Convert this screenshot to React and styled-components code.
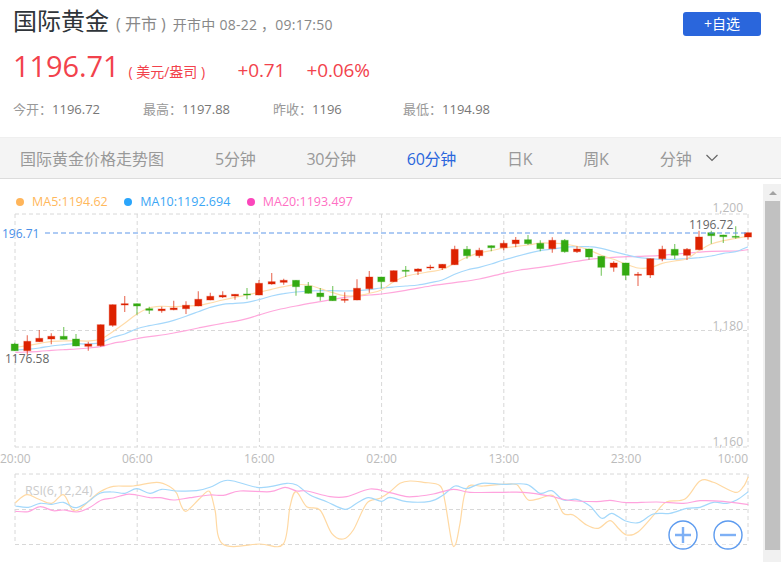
import React from "react";
import styled, { createGlobalStyle } from "styled-components";

const FONT = `"Open Sans", "Noto Sans CJK SC", sans-serif`;

// -------------------------------DATA
// [x, wick top, body top, body bottom, wick bottom, up?]
const candles = [
  [14.7, 342.7, 344, 350.7, 351, 0], [27.3, 335.3, 341.3, 350.7, 355, 1], [39.3, 330, 338.3, 341.7, 342, 1],
  [51.3, 333.3, 336.3, 339, 344.3, 1], [63.7, 327, 336.3, 339.3, 339.5, 0], [76, 334, 339, 346, 346.2, 0],
  [88.3, 341.7, 344, 346.3, 350.7, 1], [100.7, 324.5, 324.7, 345.7, 346.7, 1], [112.7, 304.5, 304.7, 325.3, 326.7, 1],
  [124.7, 296, 303.7, 305, 312, 1], [137, 303.5, 303.7, 306, 314.7, 0], [149.3, 306.7, 308.7, 310.3, 314, 0],
  [161.7, 306.7, 309, 310.7, 312.7, 1], [173.7, 300.7, 308, 309.7, 310.3, 1], [186, 301.3, 305.3, 308.7, 314, 1],
  [198.3, 291.3, 299.3, 306, 306.2, 1], [210.3, 292.7, 296.3, 300, 300.2, 1], [222.7, 291.3, 295.3, 297, 298, 1],
  [235, 294, 294.3, 296, 299.7, 1], [247, 288, 294, 294.7, 299.3, 0], [259, 280, 283.3, 295, 295.2, 1],
  [271.7, 273, 281.7, 284, 284.7, 1], [283.7, 278.7, 280.3, 282.3, 284.7, 1], [296, 280, 280.3, 286.7, 295.7, 0],
  [308.3, 282, 286, 293.3, 293.5, 0], [320.3, 288, 293, 296.7, 300.7, 0], [332.7, 286, 296, 300.7, 300.9, 0],
  [344.7, 292.3, 299.3, 300.3, 302.7, 1], [357, 279.3, 288.3, 300, 300.2, 1], [369.3, 271, 277, 288.7, 292.7, 1],
  [381.3, 276.8, 277, 281.7, 288.7, 0], [393.7, 270.5, 270.7, 281.7, 281.9, 1], [405.7, 266, 270.3, 271.3, 277, 0],
  [418, 268.3, 269, 271.3, 275, 1], [430.3, 264.7, 267, 268, 270, 1], [442.3, 264.1, 264.3, 268, 270, 1],
  [454.7, 245.7, 249.3, 264.7, 264.9, 1], [467, 246, 249.3, 255.7, 258.7, 0], [479.3, 247.7, 250.3, 255.7, 257.7, 1],
  [491.3, 245.5, 245.7, 247.7, 251.3, 0], [503.7, 240.3, 243.3, 247.7, 250.3, 1], [515.7, 237, 240, 243.7, 247.3, 1],
  [528, 235, 239.7, 243.7, 245, 0], [540.3, 240.3, 243.3, 248.7, 251.3, 0], [552.3, 237.3, 240.3, 248.7, 252.7, 1],
  [564.7, 239, 240.3, 251.7, 252.7, 0], [577, 246.3, 249, 251.7, 253, 1], [589, 248.8, 249, 257, 259.7, 0],
  [601.3, 256.1, 256.3, 267.3, 275.7, 0], [613.7, 261.3, 263, 267.3, 271.7, 1], [625.7, 262.8, 263, 275.3, 280, 0],
  [638, 272, 274.3, 275, 286, 1], [650.3, 258.5, 258.7, 275, 278, 1], [662.3, 245.7, 249.3, 258.7, 261.3, 1],
  [674.7, 244, 249.3, 255.3, 259, 0], [687, 248, 249.3, 255.3, 260, 1], [699, 230.7, 237, 249.7, 249.9, 1],
  [711.3, 230.7, 232.7, 235.7, 243.7, 0], [723.3, 234.8, 235, 236.7, 243, 0], [735.7, 226.3, 236.3, 237.3, 238.7, 0],
  [748, 232.5, 232.7, 237, 239.7, 1],
];

// points read at 3x, grouped by the part of the chart they fall in
const TOP = 179; // where the svg starts in the page
const pts = (ox, oy, list) => list.map(([x, y]) => [ox + x / 3, oy + y / 3 - TOP]);

const ma5 = [
  ...pts(0, 180, [[40,503],[80,497],[120,490],[155,484],[190,483],[228,482],[265,483],[300,478],[338,455],[374,430],[411,402],[448,384],[485,379],[521,380],[558,378],[595,376],[631,369],[668,360],[705,352],[741,345]]),
  ...pts(260, 180, [[0,336],[35,328],[71,320],[108,314],[145,315],[181,326],[218,338],[254,347],[291,347],[328,340],[364,330],[401,305],[437,289],[474,281],[511,275],[547,268],[584,250],[621,232],[658,218],[694,212],[731,204]]),
  ...pts(520, 180, [[24,195],[61,189],[97,190],[134,192],[171,199],[207,210],[244,226],[281,238],[317,252],[354,264],[391,263],[427,250],[464,243],[501,236],[537,212],[574,192],[610,182],[647,175],[684,168]]),
];
const ma10 = [
  ...pts(0, 180, [[46,510],[80,508],[118,504],[154,498],[191,494],[228,491],[265,492],[302,488],[338,472],[374,462],[411,446],[448,437],[485,430],[521,421],[558,409],[595,395],[631,382],[668,373],[705,370],[741,367]]),
  ...pts(260, 180, [[0,358],[35,348],[71,341],[108,336],[145,333],[181,332],[218,332],[254,333],[291,332],[328,329],[364,324],[401,321],[437,318],[474,315],[511,308],[547,300],[584,283],[621,270],[658,262],[694,252],[731,240]]),
  ...pts(520, 180, [[24,220],[61,212],[97,207],[134,202],[171,200],[207,200],[244,205],[281,215],[317,224],[354,232],[391,236],[427,238],[464,238],[501,236],[537,233],[574,228],[610,220],[647,215],[684,200]]),
];
const ma20 = [
  ...pts(0, 180, [[46,517],[82,516],[118,514],[154,511],[191,509],[228,507],[265,504],[302,500],[338,490],[374,484],[411,476],[448,470],[485,465],[521,459],[558,452],[595,444],[631,437],[668,430],[705,424],[741,416]]),
  ...pts(260, 180, [[0,404],[50,390],[108,378],[181,365],[254,352],[328,345],[364,342],[437,331],[511,318],[584,308],[658,297],[731,280]]),
  ...pts(520, 180, [[0,270],[61,262],[134,250],[207,238],[281,232],[354,229],[427,226],[501,219],[574,214],[647,213],[684,209]]),
];
const rsi6 = [
  ...pts(0, 430, [[46,218],[80,194],[115,207],[155,220],[190,194],[215,237],[235,240],[270,210],[300,185],[340,169],[400,168],[470,157],[510,170],[530,190],[545,230],[560,243],[600,205],[628,184],[645,240],[668,342],[780,342],[850,342],[870,230],[888,185],[920,230],[960,240],[995,310],[1030,327],[1060,300],[1100,220],[1140,205]]),
  ...pts(390, 430, [[0,185],[30,160],[60,153],[100,157],[150,167],[165,215],[185,335],[197,342],[210,280],[230,175],[280,168],[370,162],[390,175],[415,210],[450,205],[490,197],[520,250],[550,255],[590,285],[625,295],[660,272],[685,295],[710,315],[745,305],[800,245],[830,215],[885,207],[930,153],[970,157],[1035,187],[1060,170],[1075,140]]),
];
const rsi12 = [
  ...pts(0, 430, [[46,228],[85,232],[120,220],[155,223],[190,217],[225,233],[260,218],[300,190],[340,186],[375,190],[410,176],[450,190],[485,178],[530,183],[590,182],[630,172],[670,153],[700,153],[770,172],[810,170],[860,160],[890,165],[930,195],[980,215],[1035,238],[1070,220],[1105,203],[1145,214]]),
  ...pts(390, 430, [[0,202],[50,215],[120,214],[160,195],[195,168],[230,176],[275,160],[340,163],[410,163],[450,190],[485,182],[520,210],[560,208],[600,228],[635,265],[665,250],[705,272],[745,278],[790,252],[840,250],[890,235],[930,232],[970,217],[1010,220],[1040,210],[1075,185]]),
];
const rsi24 = [
  ...pts(0, 430, [[46,244],[85,245],[120,230],[160,242],[190,240],[230,246],[265,235],[305,210],[340,204],[380,193],[410,195],[450,203],[480,203],[520,210],[570,203],[630,195],[670,196],[720,183],[810,185],[855,172],[890,183],[920,183],[990,200],[1040,200],[1110,177]]),
  ...pts(390, 430, [[0,188],[50,200],[90,198],[130,192],[190,178],[240,187],[340,187],[400,187],[480,198],[530,210],[620,215],[660,211],[710,218],[800,216],[880,220],[930,212],[1000,214],[1075,224]]),
];

const smooth = (p) => {
  let d = `M${p[0][0].toFixed(1)} ${p[0][1].toFixed(1)}`;
  for (let i = 0; i < p.length - 1; i++) {
    const a = p[i - 1] || p[i];
    const b = p[i];
    const c = p[i + 1];
    const e = p[i + 2] || c;
    d += `C${(b[0] + (c[0] - a[0]) / 6).toFixed(1)} ${(b[1] + (c[1] - a[1]) / 6).toFixed(1)} ${(c[0] - (e[0] - b[0]) / 6).toFixed(1)} ${(c[1] - (e[1] - b[1]) / 6).toFixed(1)} ${c[0].toFixed(1)} ${c[1].toFixed(1)}`;
  }
  return d;
};

const gridX = [15, 137.2, 259.4, 381.6, 503.8, 626, 748];
const timeLabels = ["20:00", "06:00", "16:00", "02:00", "13:00", "23:00", "10:00"];
const tabs = ["5分钟", "30分钟", "60分钟", "日K", "周K"];
const quotes = [
  { label: "今开", value: "1196.72" },
  { label: "最高", value: "1197.88" },
  { label: "昨收", value: "1196" },
  { label: "最低", value: "1194.98" },
];
const legend = [
  { name: "MA5:1194.62", color: "#ffb85c", dot: "#ffb55a" },
  { name: "MA10:1192.694", color: "#3ba6f5", dot: "#2aa5fb" },
  { name: "MA20:1193.497", color: "#ff6fc4", dot: "#fb46bb" },
];

// -------------------------------STYLES
const GlobalStyle = createGlobalStyle`
  html, body {
    margin: 0;
    padding: 0;
    height: 100%;
    overflow: hidden;
    background: #fff;
  }
`;
const Page = styled.div`
  width: 781px;
  height: 562px;
  overflow: hidden;
  font-family: ${FONT};
  display: flex;
  flex-direction: column;
`;
const Header = styled.header`
  height: 137px;
  padding: 1px 0 0 13px;
  box-sizing: border-box;
  position: relative;
`;
const TitleRow = styled.div`
  display: flex;
  align-items: baseline;
  height: 45px;
  line-height: 39px;
`;
const Title = styled.h1`
  margin: 0;
  font-size: 24px;
  font-weight: 400;
  color: #2f3439;
`;
const Market = styled.span`
  font-size: 16px;
  color: #888;
  margin-left: 7px;
  white-space: pre;
`;
const Status = styled.span`
  font-size: 14px;
  color: #888;
  letter-spacing: 0.25px;
  margin-left: 7px;
  white-space: pre;
`;
const AddButton = styled.button`
  position: absolute;
  top: 12px;
  left: 683px;
  width: 78px;
  height: 24px;
  border: none;
  border-radius: 3px;
  background: #2a66dc;
  color: #fff;
  font-family: ${FONT};
  font-size: 14px;
  padding: 0;
  line-height: 24px;
`;
const PriceRow = styled.div`
  display: flex;
  align-items: baseline;
  height: 44px;
  line-height: 40px;
  color: #f2424c;
`;
const Price = styled.span`
  font-size: 29px;
  letter-spacing: -0.1px;
`;
const Unit = styled.span`
  font-size: 14px;
  margin-left: 9px;
  width: 109px;
  white-space: pre;
`;
const Change = styled.span`
  font-size: 19px;
  letter-spacing: -0.1px;
  width: ${(p) => p.$w}px;
`;
const QuoteRow = styled.div`
  display: grid;
  grid-template-columns: repeat(4, 130px);
  margin-top: 9px;
  line-height: 20px;
  font-size: 13px;
  color: #777;
`;
const QuoteLabel = styled.span`
  color: #999;
`;
const Toolbar = styled.nav`
  height: 42px;
  box-sizing: border-box;
  background: #f4f4f4;
  border-top: 1px solid #efefef;
  border-bottom: 1px solid #dcdcdc;
  padding-left: 20px;
  display: flex;
  align-items: center;
  gap: 51px;
  font-size: 16px;
  color: #999;
`;
const Tab = styled.span`
  color: ${(p) => (p.$active ? "#2a66dc" : "#999")};
  letter-spacing: ${(p) => (p.$title ? "0" : "-0.25px")};
  white-space: nowrap;
`;
const Period = styled.span`
  display: flex;
  align-items: center;
  gap: 14px;
`;
const Body = styled.main`
  flex: 1;
  display: flex;
  min-height: 0;
`;
const ChartArea = styled.section`
  width: 763px;
  position: relative;
`;
const Legend = styled.ul`
  list-style: none;
  margin: 0;
  padding: 14px 0 0 16px;
  display: flex;
  gap: 16.5px;
  font-size: 12.5px;
  line-height: 18px;
  position: absolute;
  top: 0;
  left: 0;
`;
const LegendItem = styled.li`
  display: flex;
  align-items: center;
  gap: 8px;
  color: ${(p) => p.$color};
  &::before {
    content: "";
    width: 8px;
    height: 8px;
    border-radius: 50%;
    background: ${(p) => p.$dot};
  }
`;
const Chart = styled.svg`
  display: block;
  width: 763px;
  height: 383px;
  text {
    font-family: ${FONT};
    font-size: 12px;
  }
`;
const Scrollbar = styled.aside`
  width: 18px;
  background: #f1f1f1;
  margin-top: 5px;
  display: flex;
  flex-direction: column;
  align-items: flex-end;
`;
const ArrowBox = styled.div`
  width: 16px;
  height: 17px;
  display: flex;
  align-items: center;
  justify-content: center;
  &::before {
    content: "";
    border-left: 4px solid transparent;
    border-right: 4px solid transparent;
    border-bottom: 4px solid #a3a3a3;
  }
`;
const Thumb = styled.div`
  width: 15px;
  height: 349px;
  background: #c1c1c1;
  margin-right: 1px;
`;

// -------------------------------COMPONENT
const Candle = ({ c }) => {
  const [x, wt, bt, bb, wb, up] = c;
  const color = up ? "#dd2200" : "#33aa11";
  return (
    <g>
      <line x1={x} x2={x} y1={wt - TOP} y2={wb - TOP} stroke={color} strokeOpacity="0.6" strokeWidth="1.2" />
      <rect
        x={x - 3.5}
        y={bt - TOP}
        width="7"
        height={Math.max(bb - bt, 1)}
        fill={color}
        stroke={color}
        strokeOpacity="0.35"
        strokeWidth="1"
      />
    </g>
  );
};

const Dash = (props) => <line stroke="#d8d8d8" strokeDasharray="4 3" strokeWidth="1" {...props} />;

const Line = ({ points, color }) => (
  <path d={smooth(points)} fill="none" stroke={color} strokeWidth="1.2" />
);

const App = () => (
  <Page>
    <GlobalStyle />
    <Header>
      <TitleRow>
        <Title>国际黄金</Title>
        <Market>( 开市 )</Market>
        <Status>开市中 08-22 ，09:17:50</Status>
      </TitleRow>
      <AddButton>+自选</AddButton>
      <PriceRow>
        <Price>1196.71</Price>
        <Unit>( 美元/盎司 )</Unit>
        <Change $w={69}>+0.71</Change>
        <Change $w={80}>+0.06%</Change>
      </PriceRow>
      <QuoteRow>
        {quotes.map((q) => (
          <span key={q.label}>
            <QuoteLabel>{q.label}：</QuoteLabel>
            {q.value}
          </span>
        ))}
      </QuoteRow>
    </Header>
    <Toolbar>
      <Tab $title>国际黄金价格走势图</Tab>
      {tabs.map((t) => (
        <Tab key={t} $active={t === "60分钟"}>{t}</Tab>
      ))}
      <Period>
        分钟
        <svg width="12" height="8" viewBox="0 0 12 8">
          <path d="M0.5 1l5.5 5.5L11.5 1" fill="none" stroke="#666" strokeWidth="1.2" />
        </svg>
      </Period>
    </Toolbar>
    <Body>
      <ChartArea>
        <Legend>
          {legend.map((l) => (
            <LegendItem key={l.name} $color={l.color} $dot={l.dot}>{l.name}</LegendItem>
          ))}
        </Legend>
        <Chart viewBox="0 0 763 383">
          {[214, 330.5, 447, 474, 509.5, 544.5].map((y) => (
            <Dash key={y} x1="15" x2="748" y1={y - TOP} y2={y - TOP} />
          ))}
          {gridX.map((x) => (
            <g key={x}>
              <Dash x1={x} x2={x} y1={214 - TOP} y2={447 - TOP} />
              <Dash x1={x} x2={x} y1={474 - TOP} y2={544 - TOP} />
            </g>
          ))}
          <text x="743" y={212 - TOP} textAnchor="end" fill="#bbb">1,200</text>
          <text x="743" y={330 - TOP} textAnchor="end" fill="#bbb">1,180</text>
          <text x="743" y={446 - TOP} textAnchor="end" fill="#bbb">1,160</text>
          <text x="25" y={495 - TOP} fill="#ccc" style={{ fontSize: 12.5 }}>RSI(6,12,24)</text>
          {timeLabels.map((t, i) => (
            <text
              key={t}
              x={i === 0 ? 0 : gridX[i]}
              y={463 - TOP}
              textAnchor={i === 0 ? "start" : i === 6 ? "end" : "middle"}
              fill="#bbb"
            >
              {t}
            </text>
          ))}
          <Line points={ma20} color="#ffa8dc" />
          <Line points={ma10} color="#a6d8fb" />
          <Line points={ma5} color="#ffdcaa" />
          {candles.map((c) => (
            <Candle key={c[0]} c={c} />
          ))}
          <line x1="45" x2="748" y1={233 - TOP} y2={233 - TOP} stroke="#5e97ea" strokeDasharray="5 3" strokeWidth="1.2" />
          <text x="2" y={237.5 - TOP} fill="#4a90e8">196.71</text>
          <text x="5" y={363 - TOP} fill="#666">1176.58</text>
          <text x="689" y={229 - TOP} fill="#666">1196.72</text>
          <Line points={rsi6} color="#ffd9a3" />
          <Line points={rsi12} color="#a3d8fb" />
          <Line points={rsi24} color="#ffa3de" />
          <g fill="#fff" fillOpacity="0.4" stroke="#5d9bef" strokeWidth="1.4">
            <circle cx="683" cy={535 - TOP} r="14" />
            <circle cx="728" cy={535 - TOP} r="14" />
          </g>
          <g stroke="#7eb0f5" strokeWidth="2.4">
            <path d={`M675 ${535 - TOP}H691M683 ${527 - TOP}V${543 - TOP}`} />
            <path d={`M720 ${535 - TOP}H736`} />
          </g>
        </Chart>
      </ChartArea>
      <Scrollbar>
        <ArrowBox />
        <Thumb />
      </Scrollbar>
    </Body>
  </Page>
);

export default App;
